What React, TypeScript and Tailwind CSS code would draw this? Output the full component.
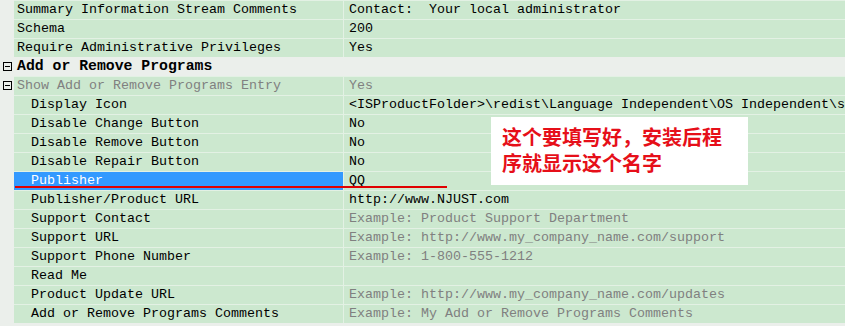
import { ReactNode } from "react";

type Prop = {
  name: string;
  value?: string;
  indent?: boolean;
  dim?: boolean;
  dimValue?: boolean;
  icon?: boolean;
  selected?: boolean;
};

const rows: Prop[] = [
  { name: "Summary Information Stream Comments", value: "Contact:  Your local administrator" },
  { name: "Schema", value: "200" },
  { name: "Require Administrative Privileges", value: "Yes" },
];

const children: Prop[] = [
  { name: "Show Add or Remove Programs Entry", value: "Yes", dim: true, dimValue: true, icon: true },
  { name: "Display Icon", value: "<ISProductFolder>\\redist\\Language Independent\\OS Independent\\setup.ico", indent: true },
  { name: "Disable Change Button", value: "No", indent: true },
  { name: "Disable Remove Button", value: "No", indent: true },
  { name: "Disable Repair Button", value: "No", indent: true },
  { name: "Publisher", value: "QQ", indent: true, selected: true },
  { name: "Publisher/Product URL", value: "http://www.NJUST.com", indent: true },
  { name: "Support Contact", value: "Example: Product Support Department", indent: true, dimValue: true },
  { name: "Support URL", value: "Example: http://www.my_company_name.com/support", indent: true, dimValue: true },
  { name: "Support Phone Number", value: "Example: 1-800-555-1212", indent: true, dimValue: true },
  { name: "Read Me", value: "", indent: true },
  { name: "Product Update URL", value: "Example: http://www.my_company_name.com/updates", indent: true, dimValue: true },
  { name: "Add or Remove Programs Comments", value: "Example: My Add or Remove Programs Comments", indent: true, dimValue: true },
];

const MinusBox = () => (
  <svg width="9" height="9" viewBox="0 0 9 9" className="block">
    <rect x="0.5" y="0.5" width="8" height="8" fill="none" stroke="#000" strokeWidth="1" />
    <line x1="2" y1="4.5" x2="7" y2="4.5" stroke="#000" strokeWidth="1" />
  </svg>
);

const Gutter = ({ children }: { children?: ReactNode }) => (
  <div className="w-[14px] h-full shrink-0 flex items-center pl-[3px]">{children}</div>
);

const Row = ({ p }: { p: Prop }) => (
  <div className="flex h-[19px]">
    <Gutter>{p.icon && <MinusBox />}</Gutter>
    <div
      className={`w-[329px] shrink-0 h-full border-t border-[#e3f1e4] flex items-center whitespace-pre overflow-hidden ${
        p.indent ? "pl-[17px]" : "pl-[3px]"
      } ${p.selected ? "bg-[#3399ff] text-white" : "bg-[#cce8cf]"} ${p.dim ? "text-[#808080]" : ""}`}
    >
      {p.name}
    </div>
    <div
      className={`flex-1 h-full border-t border-l border-[#e3f1e4] bg-[#cce8cf] flex items-center pl-[5px] whitespace-pre overflow-hidden ${
        p.dimValue ? "text-[#808080]" : "text-black"
      }`}
    >
      {p.value}
    </div>
  </div>
);

const App = () => {
  return (
    <div className="relative w-[845px] h-[326px] overflow-hidden bg-[#ebefeb] text-black font-['Liberation_Mono',monospace] text-[13.33px] leading-none">
      {rows.map((p) => (
        <Row key={p.name} p={p} />
      ))}
      <div className="flex h-[19px] items-center">
        <Gutter>
          <MinusBox />
        </Gutter>
        <div className="pl-[3px] font-bold text-[14.8px]">Add or Remove Programs</div>
      </div>
      {children.map((p) => (
        <Row key={p.name} p={p} />
      ))}

      {/* annotation */}
      <div className="absolute left-[491px] top-[117px] w-[257px] h-[68px] bg-white pl-[11px] pt-[7px] font-['Noto_Sans_CJK_SC',sans-serif] font-bold text-[20px] leading-[26px] text-[#e60f19]">
        这个要填写好，安装后程
        <br />
        序就显示这个名字
      </div>
      <div className="absolute left-[15px] top-[186px] w-[432px] h-[2px] bg-[#e00000]" />
    </div>
  );
};

export default App;
